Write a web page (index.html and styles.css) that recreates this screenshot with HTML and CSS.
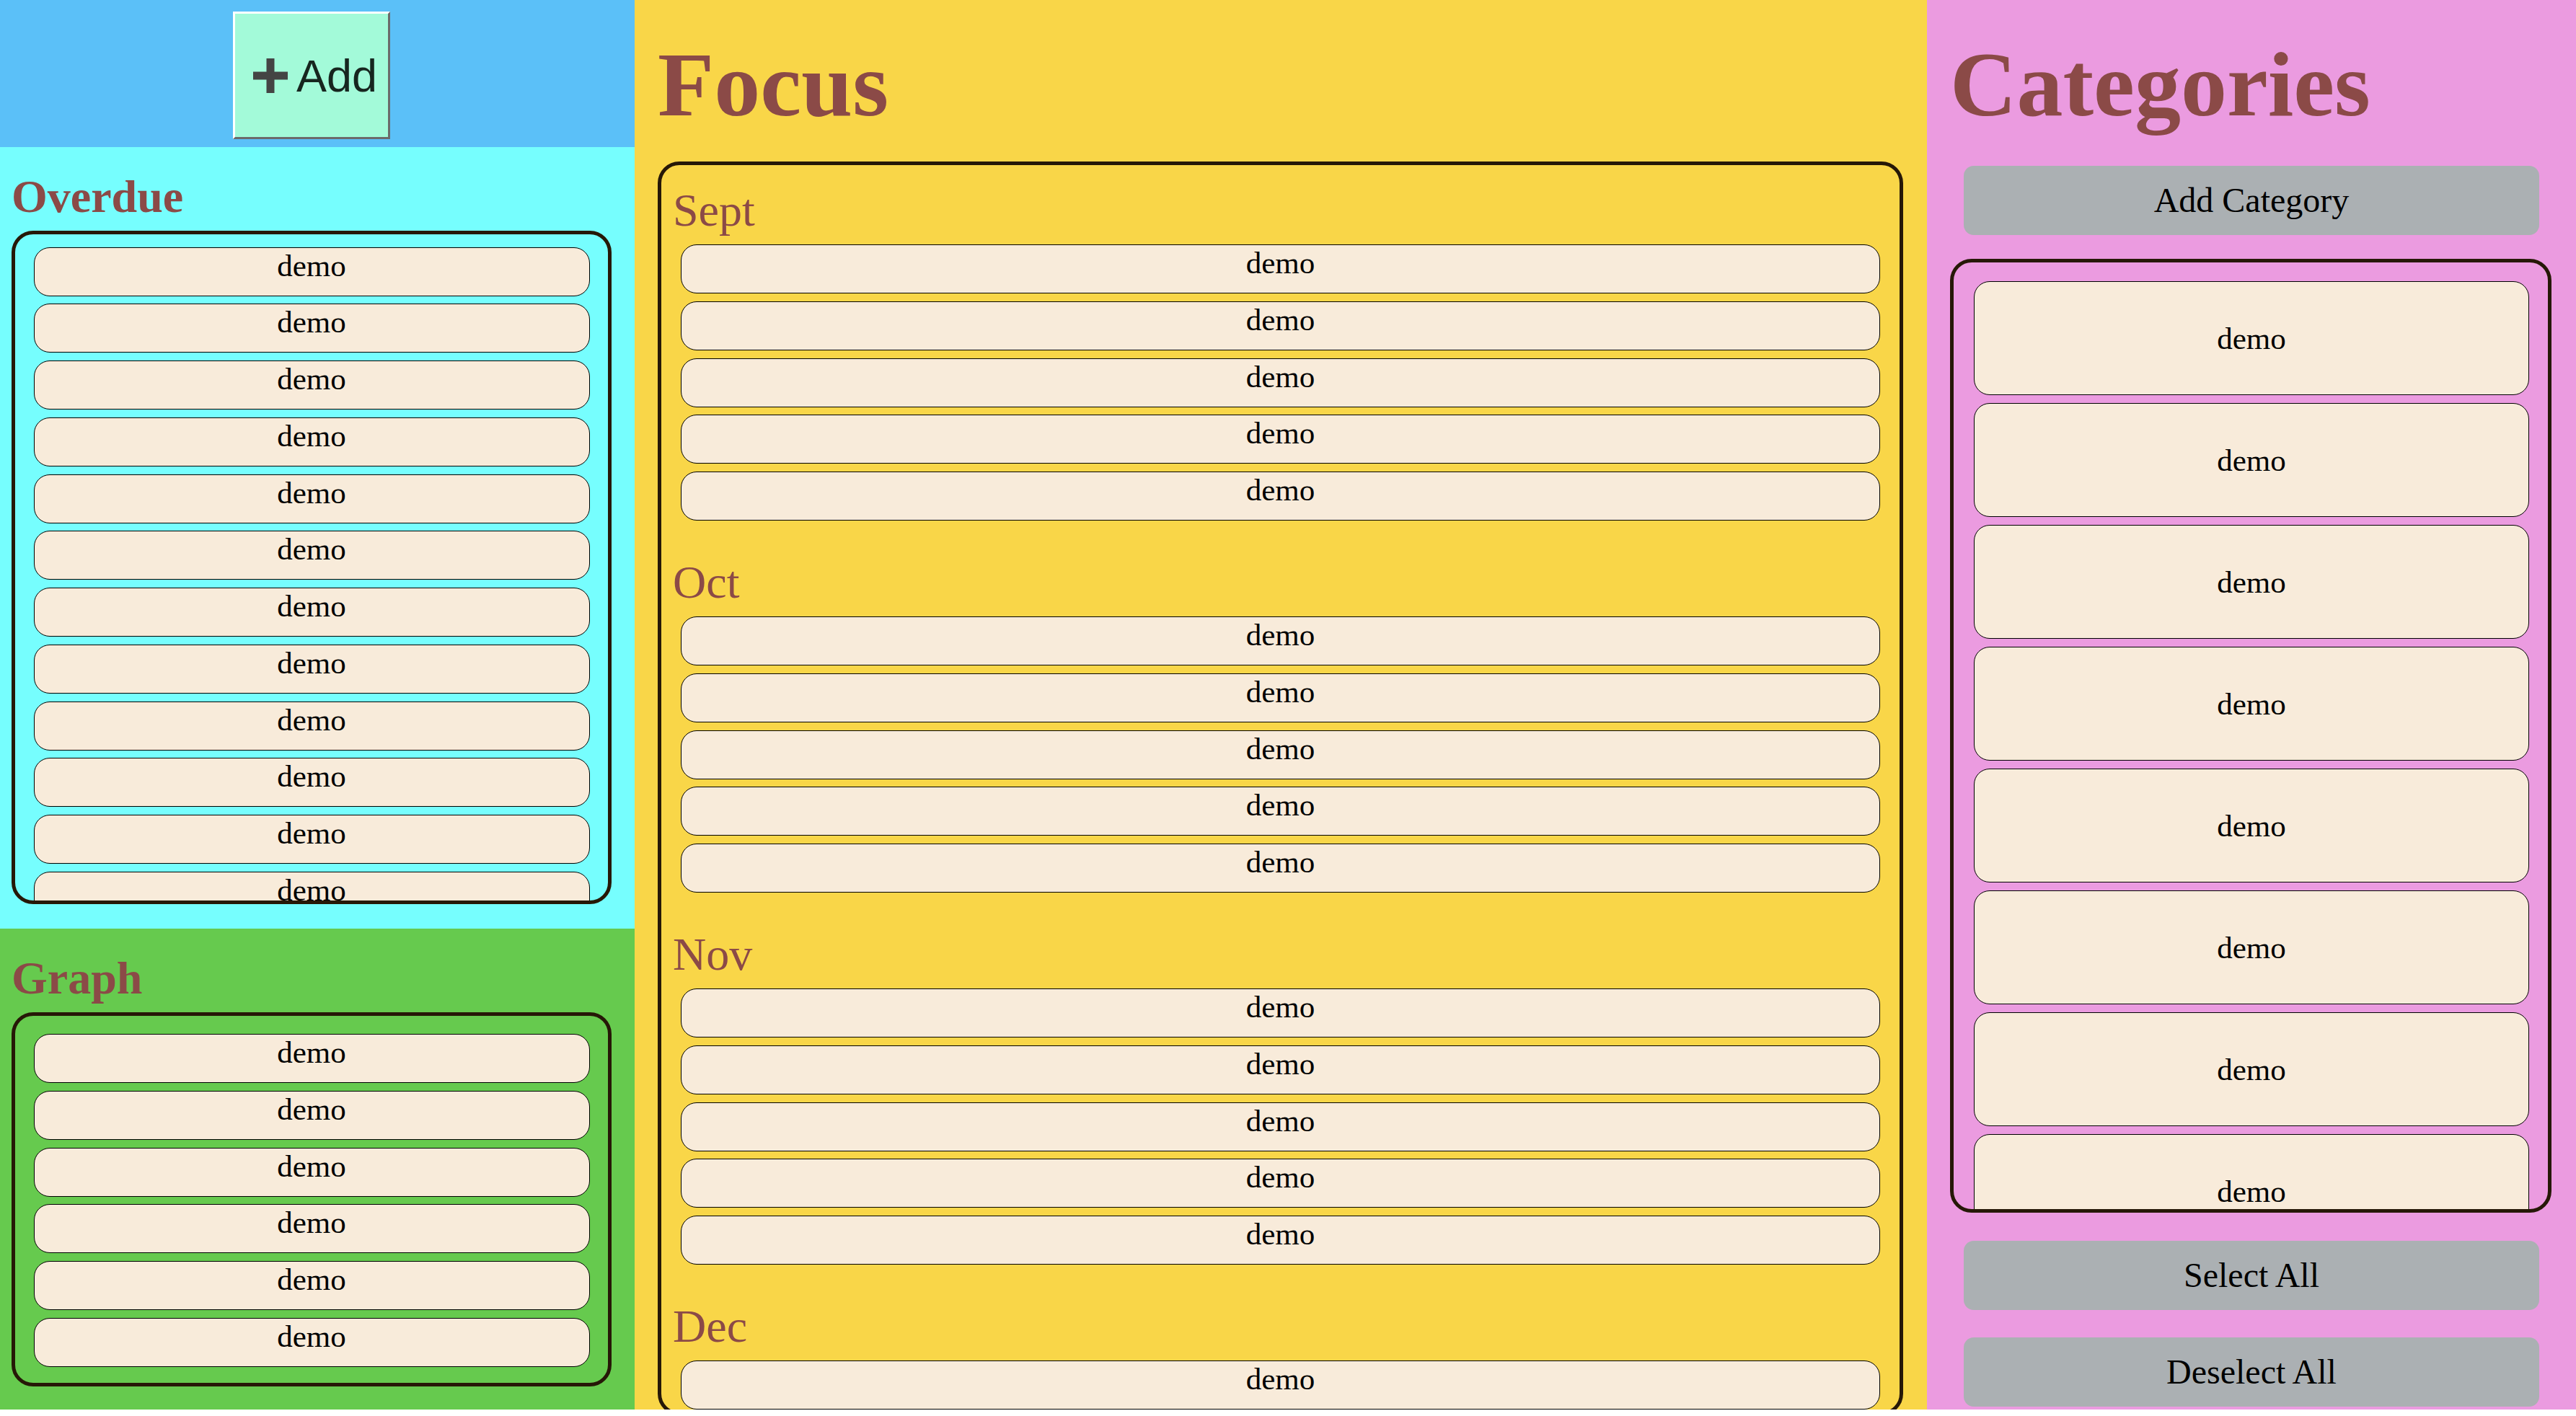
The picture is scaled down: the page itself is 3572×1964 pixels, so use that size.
FILE: index.html
```html
<!DOCTYPE html>
<html lang="en">
<head>
<meta charset="utf-8">
<title>Planner</title>
<link rel="stylesheet" href="styles.css">
</head>
<body>
<div class="app">
  <aside class="left-col">
    <header class="add-bar">
      <button class="add-btn" type="button">
        <svg class="plus" viewBox="0 0 48 48" width="48" height="48" aria-hidden="true">
          <rect x="0" y="18.5" width="48" height="11" fill="#444444"/>
          <rect x="18.5" y="0" width="11" height="48" fill="#444444"/>
        </svg>
        <span class="add-label">Add</span>
      </button>
    </header>
    <section class="panel overdue">
      <h2 class="panel-title">Overdue</h2>
      <div class="list-box overdue-box">
        <div class="item">demo</div>
        <div class="item">demo</div>
        <div class="item">demo</div>
        <div class="item">demo</div>
        <div class="item">demo</div>
        <div class="item">demo</div>
        <div class="item">demo</div>
        <div class="item">demo</div>
        <div class="item">demo</div>
        <div class="item">demo</div>
        <div class="item">demo</div>
        <div class="item">demo</div>
      </div>
    </section>
    <section class="panel graph">
      <h2 class="panel-title">Graph</h2>
      <div class="list-box graph-box">
        <div class="item">demo</div>
        <div class="item">demo</div>
        <div class="item">demo</div>
        <div class="item">demo</div>
        <div class="item">demo</div>
        <div class="item">demo</div>
      </div>
    </section>
  </aside>

  <main class="focus-col">
    <h1 class="big-title">Focus</h1>
    <div class="focus-box">
      <div class="month">
        <h3 class="month-title">Sept</h3>
        <div class="month-items">
          <div class="item">demo</div>
          <div class="item">demo</div>
          <div class="item">demo</div>
          <div class="item">demo</div>
          <div class="item">demo</div>
        </div>
      </div>
      <div class="month">
        <h3 class="month-title">Oct</h3>
        <div class="month-items">
          <div class="item">demo</div>
          <div class="item">demo</div>
          <div class="item">demo</div>
          <div class="item">demo</div>
          <div class="item">demo</div>
        </div>
      </div>
      <div class="month">
        <h3 class="month-title">Nov</h3>
        <div class="month-items">
          <div class="item">demo</div>
          <div class="item">demo</div>
          <div class="item">demo</div>
          <div class="item">demo</div>
          <div class="item">demo</div>
        </div>
      </div>
      <div class="month">
        <h3 class="month-title">Dec</h3>
        <div class="month-items">
          <div class="item">demo</div>
          <div class="item">demo</div>
          <div class="item">demo</div>
          <div class="item">demo</div>
          <div class="item">demo</div>
        </div>
      </div>
    </div>
  </main>

  <aside class="cat-col">
    <h1 class="big-title">Categories</h1>
    <button class="grey-btn add-cat" type="button">Add Category</button>
    <div class="cat-box">
      <div class="cat-item">demo</div>
      <div class="cat-item">demo</div>
      <div class="cat-item">demo</div>
      <div class="cat-item">demo</div>
      <div class="cat-item">demo</div>
      <div class="cat-item">demo</div>
      <div class="cat-item">demo</div>
      <div class="cat-item">demo</div>
    </div>
    <button class="grey-btn select-all" type="button">Select All</button>
    <button class="grey-btn deselect-all" type="button">Deselect All</button>
  </aside>
</div>
</body>
</html>
```

FILE: styles.css
```css
* {
  box-sizing: border-box;
}

html, body {
  margin: 0;
  padding: 0;
  background: #ffffff;
}

body {
  font-family: "Liberation Serif", "Times New Roman", Times, serif;
  color: #000000;
}

.app {
  display: grid;
  grid-template-columns: 880px 1792px 900px;
  height: 1955px;
}

/* ---------- left column ---------- */
.left-col {
  display: flex;
  flex-direction: column;
  height: 1955px;
}

.add-bar {
  height: 204px;
  flex: 0 0 204px;
  background: #5bc0f8;
  display: flex;
  justify-content: center;
  align-items: flex-start;
  padding: 16px 32px 0 16px;
}

.add-btn {
  width: 218px;
  height: 177px;
  display: flex;
  align-items: center;
  gap: 12px;
  padding: 0 0 0 25px;
  margin: 0;
  background: #a3fad9;
  border-style: solid;
  border-width: 3px;
  border-color: #ffffff #6b6b6b #6b6b6b #ffffff;
  border-radius: 0;
  font-family: "Liberation Sans", Arial, Helvetica, sans-serif;
  cursor: pointer;
}

.plus {
  display: block;
  flex: 0 0 48px;
}

.add-label {
  font-size: 63px;
  line-height: 63px;
  color: #17261f;
  padding-top: 2px;
}

.panel {
  padding: 33px 32px 0 16px;
  display: flex;
  flex-direction: column;
}

.overdue {
  background: #76fefe;
  height: 1084px;
  flex: 0 0 1084px;
}

.graph {
  background: #66ca4e;
  flex: 1 1 auto;
}

.panel-title {
  margin: 0 0 11px 0;
  font-size: 64px;
  line-height: 72px;
  font-weight: bold;
  color: #8b4a47;
}

.list-box {
  border: 5px solid #261807;
  border-radius: 30px;
  display: flex;
  flex-direction: column;
  gap: 10.75px;
  overflow: hidden;
}

.overdue-box {
  height: 934px;
  flex: 0 0 934px;
  padding: 17.7px 25.5px 0 25.5px;
}

.graph-box {
  padding: 25px 25.5px 22px 25.5px;
}

.item {
  flex: 0 0 68px;
  height: 68px;
  background: #f8ebda;
  border: 1px solid #000000;
  border-radius: 22px;
  text-align: center;
  font-size: 43px;
  line-height: 49px;
  color: #000000;
}

/* ---------- middle column ---------- */
.focus-col {
  background: #f9d648;
  padding: 45px 33px 0 32px;
  display: flex;
  flex-direction: column;
  height: 1955px;
  overflow: visible;
}

.big-title {
  margin: 0 0 35px 0;
  font-size: 128px;
  line-height: 144px;
  font-weight: bold;
  color: #8b4a47;
}

.focus-box {
  height: 1739px;
  flex: 0 0 1739px;
  border: 5px solid #261807;
  border-radius: 30px;
  padding: 0 16px;
  overflow: hidden;
}

.month {
  padding-top: 27px;
  margin-bottom: 23px;
}

.month-title {
  margin: 0 0 11px 0;
  font-size: 64px;
  line-height: 72px;
  font-weight: normal;
  color: #8b4a47;
}

.month-items {
  display: flex;
  flex-direction: column;
  gap: 10.75px;
  margin: 0 11px;
}

/* ---------- right column ---------- */
.cat-col {
  background: #eb9be0;
  padding: 45px 34px 0 32px;
  display: flex;
  flex-direction: column;
  height: 1955px;
}

.cat-col .big-title {
  margin-bottom: 0;
}

.grey-btn {
  display: flex;
  align-items: center;
  justify-content: center;
  height: 96px;
  flex: 0 0 96px;
  margin: 0 17px 0 19px;
  padding: 0;
  background: #abb0b3;
  border: none;
  border-radius: 14px;
  font-family: "Liberation Serif", "Times New Roman", Times, serif;
  font-size: 48px;
  line-height: 54px;
  color: #000000;
  cursor: pointer;
}

.add-cat {
  margin-top: 41px;
}

.select-all {
  margin-top: 39px;
}

.deselect-all {
  margin-top: 38px;
}

.cat-box {
  margin-top: 33px;
  height: 1323px;
  flex: 0 0 1323px;
  border: 5px solid #261807;
  border-radius: 30px;
  padding: 26px 26px 0 28px;
  display: flex;
  flex-direction: column;
  gap: 11px;
  overflow: hidden;
}

.cat-item {
  flex: 0 0 158px;
  height: 158px;
  display: flex;
  align-items: center;
  justify-content: center;
  background: #f8ebda;
  border: 1px solid #000000;
  border-radius: 22px;
  font-size: 43px;
  line-height: 49px;
}
```
